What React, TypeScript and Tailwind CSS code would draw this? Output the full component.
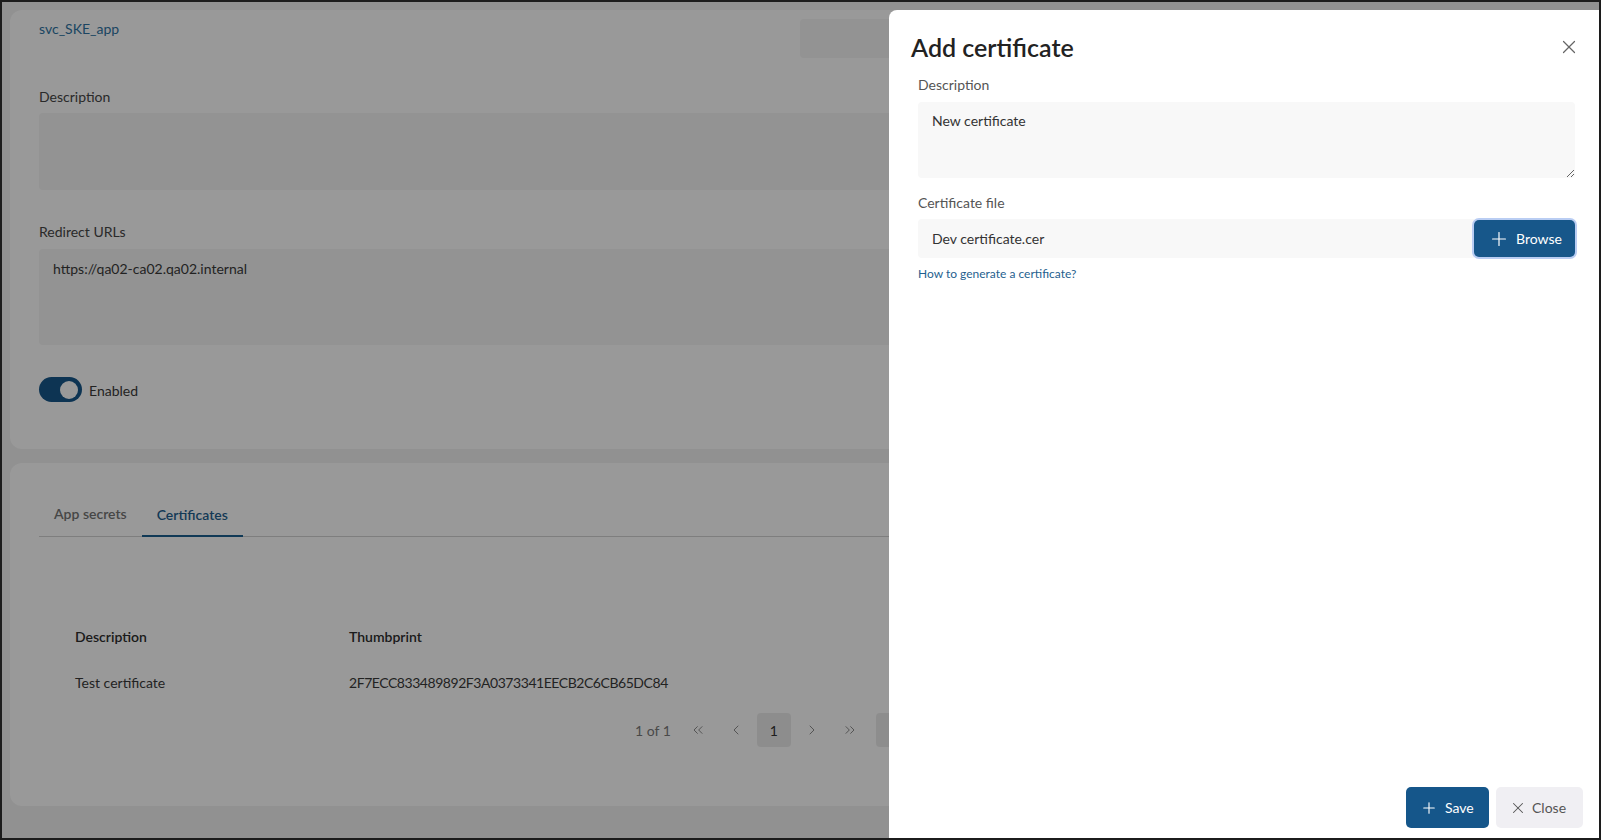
import { X, Plus, ChevronsLeft, ChevronLeft, ChevronRight, ChevronsRight } from 'lucide-react';

function PageBtn({ children, active }: { children: React.ReactNode; active?: boolean }) {
  return (
    <div
      className={
        'flex h-[34px] w-[34px] items-center justify-center rounded ' +
        (active ? 'bg-[#ececec] text-[#333]' : 'text-[#8c8c8c]')
      }
    >
      {children}
    </div>
  );
}

export default function App() {
  return (
    <div className="relative h-[840px] w-[1601px] overflow-hidden bg-[#f2f2f2] font-[family-name:Lato,sans-serif] text-[14px] text-[#333]">
      {/* Page */}
      <div className="px-[10px] pt-[10px]">
        <div className="rounded-xl bg-white pb-[47px] pl-[29px] pr-7 pt-[9px]">
          <div className="grid grid-cols-[737px_1fr] gap-x-6">
            <div className="leading-5 text-[#2f74a3]">svc_SKE_app</div>
            <div className="h-[39px] rounded bg-[#f5f5f5]" />
          </div>
          <div className="mt-[29px] leading-5 text-[#464646]">Description</div>
          <div className="mt-[6px] h-[77px] rounded bg-[#f5f5f5]" />
          <div className="mt-[32px] leading-5 text-[#464646]">Redirect URLs</div>
          <div className="mt-[7px] h-[96px] rounded bg-[#f5f5f5] px-[14px] pt-[10px] leading-5 text-[#3a3a3a]">
            https://qa02-ca02.qa02.internal
          </div>
          <div className="mt-[32px] flex items-center gap-[7px]">
            <div className="flex h-[25px] w-[43px] items-center justify-end rounded-full bg-[#17578a] pr-[4px]">
              <div className="h-[18px] w-[18px] rounded-full bg-white" />
            </div>
            <span className="pt-[3px] leading-5 text-[#3a3a3a]">Enabled</span>
          </div>
        </div>

        <div className="mt-[14px] rounded-xl bg-white pb-[59px] pl-[29px] pr-7 pt-7">
          <div className="flex border-b border-[#d3d3d3]">
            <div className="flex h-[45px] items-center px-[15px] font-semibold text-[#757575]">App secrets</div>
            <div className="-mb-px flex h-[46px] items-center border-b-2 border-[#1c5f8f] px-[15px] pt-[2px] font-semibold text-[#1f5f8f]">
              Certificates
            </div>
          </div>
          <div className="mt-[76px] pl-9">
            <div className="grid h-[46px] grid-cols-[274px_1fr] items-center font-semibold text-[#2e2e2e]">
              <div>Description</div>
              <div>Thumbprint</div>
            </div>
            <div className="grid h-[46px] grid-cols-[274px_1fr] items-center text-[#3a3a3a]">
              <div>Test certificate</div>
              <div className="tracking-[-0.45px]">2F7ECC833489892F3A0373341EECB2C6CB65DC84</div>
            </div>
          </div>
          <div className="ml-[596px] mt-[8px] flex h-[34px] items-center">
            <span className="mr-[10px] text-[#7a7a7a]">1 of 1</span>
            <div className="flex items-center gap-[4px]">
              <PageBtn>
                <ChevronsLeft size={16} strokeWidth={1.5} />
              </PageBtn>
              <PageBtn>
                <ChevronLeft size={16} strokeWidth={1.5} />
              </PageBtn>
              <PageBtn active>1</PageBtn>
              <PageBtn>
                <ChevronRight size={16} strokeWidth={1.5} />
              </PageBtn>
              <PageBtn>
                <ChevronsRight size={16} strokeWidth={1.5} />
              </PageBtn>
            </div>
            <div className="ml-[9px] h-[34px] w-[89px] rounded bg-[#ececec]" />
          </div>
        </div>
      </div>

      {/* Overlay */}
      <div className="absolute inset-0 bg-black/40" />

      {/* Dialog */}
      <div className="absolute left-[889px] top-[10px] flex h-[830px] w-[715px] flex-col rounded-tl-lg bg-white">
        <div className="flex items-center justify-between pl-[22px] pr-[24px] pt-[21px]">
          <h2 className="text-[25px] font-semibold leading-8 text-[#222]">Add certificate</h2>
          <X size={22} strokeWidth={1.3} className="text-[#666]" />
        </div>
        <div className="px-[29px]">
          <div className="mt-[12px] leading-5 text-[#555]">Description</div>
          <textarea
            readOnly
            value="New certificate"
            className="mt-[7px] block h-[76px] w-full resize-y rounded bg-[#f8f8f8] px-[14px] pt-[9px] leading-5 text-[#333] outline-none"
          />
          <div className="mt-[15px] leading-5 text-[#555]">Certificate file</div>
          <div className="mt-[6px] flex items-center">
            <div className="flex h-[39px] flex-1 items-center rounded-l bg-[#f8f8f8] px-[14px] text-[#333]">
              Dev certificate.cer
            </div>
            <button className="flex h-[37px] w-[101px] items-center gap-[6px] rounded-[5px] bg-[#17578a] pl-[14px] text-white ring-2 ring-[#b9cdf3]">
              <Plus size={22} strokeWidth={1.3} />
              <span>Browse</span>
            </button>
          </div>
          <div className="mt-[8px] text-[12px] leading-4 text-[#1f5f8f]">How to generate a certificate?</div>
        </div>
        <div className="mt-auto flex justify-end gap-[7px] pb-[12px] pr-[21px]">
          <button className="flex h-[41px] w-[83px] items-center gap-[7px] rounded-[5px] bg-[#15568a] pl-[14px] text-white">
            <Plus size={18} strokeWidth={1.5} />
            <span>Save</span>
          </button>
          <button className="flex h-[41px] w-[87px] items-center gap-[5px] rounded-[5px] bg-[#f0eff3] pl-[13px] text-[#555]">
            <X size={18} strokeWidth={1.4} />
            <span>Close</span>
          </button>
        </div>
      </div>

      {/* Frame border */}
      <div className="pointer-events-none absolute inset-0 border-2 border-[#1c1c1c]" />
    </div>
  );
}
